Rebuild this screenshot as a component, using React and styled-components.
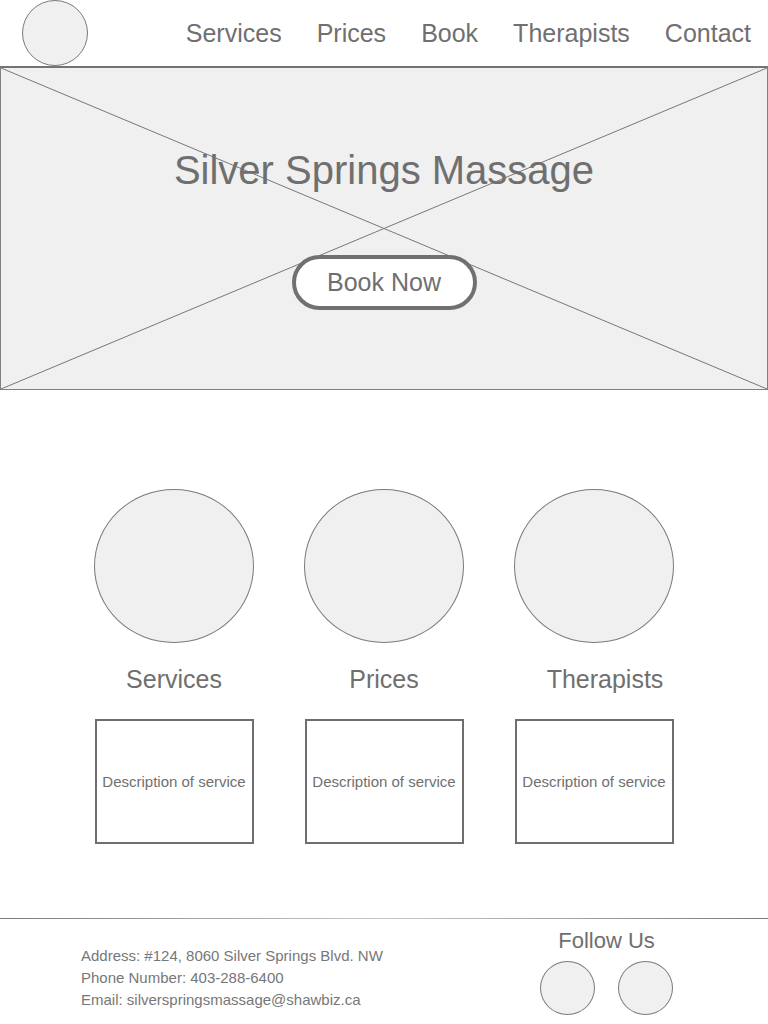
import React from "react";
import styled, { createGlobalStyle } from "styled-components";

const Global = createGlobalStyle`
  html, body { margin: 0; padding: 0; background: #ffffff; }
  body { font-family: "Liberation Sans", Arial, Helvetica, sans-serif; color: #6f6f6f; }
  * { box-sizing: border-box; }
`;

const Page = styled.div`
  width: 768px;
  display: flex;
  flex-direction: column;
`;

const Header = styled.header`
  height: 66px;
  display: flex;
  align-items: center;
  justify-content: space-between;
  padding: 0 17px 0 22px;
`;

const Logo = styled.div`
  width: 66px;
  height: 66px;
  border-radius: 50%;
  background: #f0f0f0;
  border: 1px solid #7a7a7a;
`;

const Nav = styled.nav`
  display: flex;
  gap: 35px;
  padding-top: 1px;
`;

const NavLink = styled.a`
  font-size: 25px;
  line-height: 29px;
  color: #707070;
  text-decoration: none;
`;

const Hero = styled.section`
  position: relative;
  height: 324px;
  background: #f0f0f0;
  border: 1px solid #808080;
  border-top: 2px solid #737373;
  display: flex;
  flex-direction: column;
  align-items: center;
  padding-top: 79px;
`;

const Cross = styled.svg`
  position: absolute;
  inset: 0;
  width: 100%;
  height: 100%;
`;

const Title = styled.h1`
  position: relative;
  margin: 0;
  font-size: 40px;
  line-height: 46px;
  font-weight: normal;
  color: #6f6f6f;
`;

const BookButton = styled.button`
  position: relative;
  margin-top: 62px;
  width: 185px;
  height: 55px;
  border: 4px solid #707070;
  border-radius: 28px;
  background: #ffffff;
  font-family: inherit;
  font-size: 25px;
  color: #6f6f6f;
  padding: 0;
`;

const Features = styled.section`
  margin-top: 99px;
  display: flex;
  justify-content: center;
  gap: 51px;
`;

const Feature = styled.div`
  width: 159px;
  display: flex;
  flex-direction: column;
  align-items: center;
`;

const Bubble = styled.div`
  width: 160px;
  height: 154px;
  border-radius: 50%;
  background: #f0f0f0;
  border: 1px solid #7a7a7a;
`;

const FeatureLabel = styled.h2`
  margin: 22px 0 0 ${p => p.$shift || 0}px;
  font-size: 25px;
  line-height: 29px;
  font-weight: normal;
  color: #6f6f6f;
  white-space: nowrap;
`;

const DescBox = styled.div`
  margin-top: 25px;
  width: 159px;
  height: 125px;
  border: 2px solid #6e6e6e;
  background: #ffffff;
  display: flex;
  align-items: center;
  justify-content: center;
  font-size: 15px;
  color: #707070;
  white-space: nowrap;
`;

const Divider = styled.div`
  margin-top: 74px;
  height: 1px;
  background: linear-gradient(to right, #7a7a7a, #c8c8c8 50%, #7a7a7a);
`;

const Footer = styled.footer`
  display: grid;
  grid-template-columns: 459px 133px;
  padding-left: 81px;
  padding-top: 9px;
`;

const Contact = styled.div`
  padding-top: 17px;
  display: flex;
  flex-direction: column;
`;

const ContactLine = styled.p`
  margin: 0;
  font-size: 15px;
  line-height: 22px;
  color: #777777;
  white-space: nowrap;
`;

const Social = styled.div`
  display: flex;
  flex-direction: column;
  align-items: center;
`;

const FollowTitle = styled.h3`
  margin: 0;
  font-size: 22px;
  line-height: 25px;
  font-weight: normal;
  color: #6f6f6f;
`;

const SocialRow = styled.div`
  margin-top: 8px;
  display: flex;
  gap: 23px;
`;

const SocialDot = styled.div`
  width: 55px;
  height: 54px;
  border-radius: 50%;
  background: #f0f0f0;
  border: 1px solid #7a7a7a;
`;

const features = [
  { label: "Services" },
  { label: "Prices" },
  { label: "Therapists", shift: 22 },
];

export default function App() {
  return (
    <Page>
      <Global />
      <Header>
        <Logo />
        <Nav>
          {["Services", "Prices", "Book", "Therapists", "Contact"].map(n => (
            <NavLink key={n}>{n}</NavLink>
          ))}
        </Nav>
      </Header>
      <Hero>
        <Cross viewBox="0 0 100 100" preserveAspectRatio="none">
          <line x1="0" y1="0" x2="100" y2="100" stroke="#777" strokeWidth="1" vectorEffect="non-scaling-stroke" />
          <line x1="0" y1="100" x2="100" y2="0" stroke="#777" strokeWidth="1" vectorEffect="non-scaling-stroke" />
        </Cross>
        <Title>Silver Springs Massage</Title>
        <BookButton>Book Now</BookButton>
      </Hero>
      <Features>
        {features.map(f => (
          <Feature key={f.label}>
            <Bubble />
            <FeatureLabel $shift={f.shift}>{f.label}</FeatureLabel>
            <DescBox>Description of service</DescBox>
          </Feature>
        ))}
      </Features>
      <Divider />
      <Footer>
        <Contact>
          <ContactLine>Address: #124, 8060 Silver Springs Blvd. NW</ContactLine>
          <ContactLine>Phone Number: 403-288-6400</ContactLine>
          <ContactLine>Email: silverspringsmassage@shawbiz.ca</ContactLine>
        </Contact>
        <Social>
          <FollowTitle>Follow Us</FollowTitle>
          <SocialRow>
            <SocialDot />
            <SocialDot />
          </SocialRow>
        </Social>
      </Footer>
    </Page>
  );
}
